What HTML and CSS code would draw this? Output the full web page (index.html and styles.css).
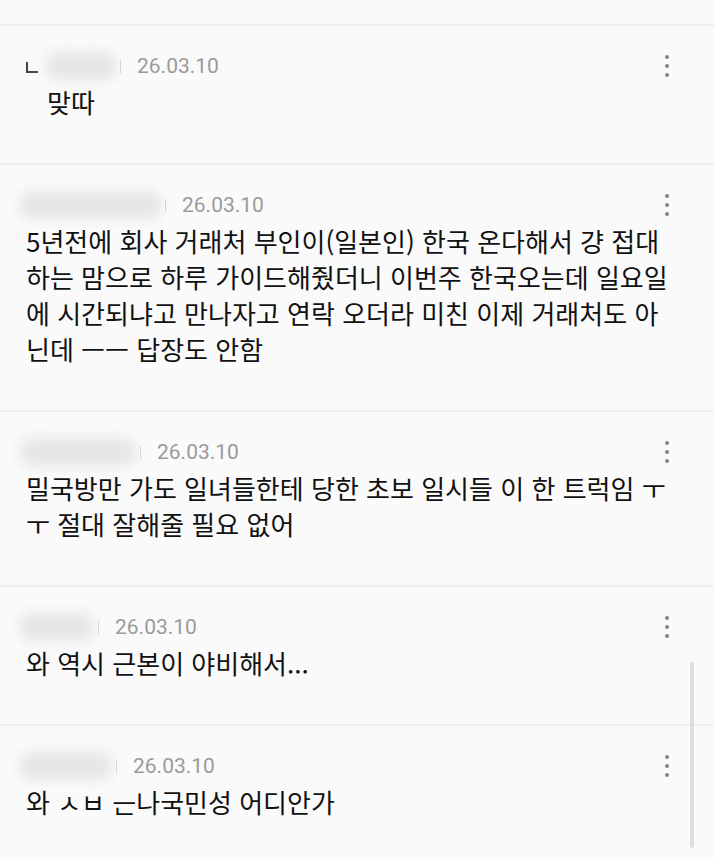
FILE: index.html
```html
<!DOCTYPE html>
<html lang="ko">
<head>
	<meta charset="UTF-8">
	<title>댓글</title>
	<link rel="stylesheet" href="styles.css">
</head>
<body>
	<ul class="comments">
		<li class="comment reply">
			<div class="comment-head">
				<span class="reply-mark"></span>
				<span class="nick" style="width:70px"></span>
				<span class="sep"></span>
				<span class="date">26.03.10</span>
				<span class="more"><i></i><i></i><i></i></span>
			</div>
			<p class="comment-body">맞따</p>
		</li>
		<li class="comment">
			<div class="comment-head">
				<span class="nick" style="width:141px"></span>
				<span class="sep"></span>
				<span class="date">26.03.10</span>
				<span class="more"><i></i><i></i><i></i></span>
			</div>
			<p class="comment-body">5년전에 회사 거래처 부인이(일본인) 한국 온다해서 걍 접대 하는 맘으로 하루 가이드해줬더니 이번주 한국오는데 일요일에 시간되냐고 만나자고 연락 오더라 미친 이제 거래처도 아닌데 ㅡㅡ 답장도 안함</p>
		</li>
		<li class="comment">
			<div class="comment-head">
				<span class="nick" style="width:116px"></span>
				<span class="sep"></span>
				<span class="date">26.03.10</span>
				<span class="more"><i></i><i></i><i></i></span>
			</div>
			<p class="comment-body">밀국방만 가도 일녀들한테 당한 초보 일시들 이 한 트럭임 ㅜ ㅜ 절대 잘해줄 필요 없어</p>
		</li>
		<li class="comment">
			<div class="comment-head">
				<span class="nick" style="width:74px"></span>
				<span class="sep"></span>
				<span class="date">26.03.10</span>
				<span class="more"><i></i><i></i><i></i></span>
			</div>
			<p class="comment-body">와 역시 근본이 야비해서...</p>
		</li>
		<li class="comment">
			<div class="comment-head">
				<span class="nick" style="width:92px"></span>
				<span class="sep"></span>
				<span class="date">26.03.10</span>
				<span class="more"><i></i><i></i><i></i></span>
			</div>
			<p class="comment-body">와 ㅅㅂ ᅟᅳᆫ나국민성 어디안가</p>
		</li>
	</ul>
	<div class="scrollbar"></div>
</body>
</html>
```

FILE: styles.css
```css
* { margin: 0; padding: 0; box-sizing: border-box; }
html, body { height: 100%; }
body { background: #fafafa; font-family: "Noto Sans CJK KR", "Noto Sans", sans-serif; color: #111; overflow: hidden; }

.comments { list-style: none; margin-top: 24px; }
.comment { border-top: 2px solid #efefef; padding: 28px 0 43px 0; }

.comment-head { display: flex; align-items: center; height: 24px; padding-left: 20px; padding-right: 45px; }
.reply .comment-head { padding-left: 26px; }
.reply-mark { width: 12px; height: 11px; border-left: 2px solid #444; border-bottom: 2px solid #444; margin: 2px 8px 0 0; }
.nick { height: 28px; background: #e6e6e6; border-radius: 12px; filter: blur(6px); }
.sep { width: 1px; height: 13px; background: #d2d2d2; margin: 0 16px 0 4px; }
.date { font-family: Roboto, "Liberation Sans", sans-serif; font-size: 21px; color: #9a9a9a; line-height: 24px; }

.more { margin-left: auto; display: flex; flex-direction: column; gap: 5px; }
.more i { display: block; width: 4px; height: 4px; border-radius: 50%; background: #858585; }

.comment-body { margin-top: 6px; padding: 0 33px 0 26px; font-size: 26px; line-height: 36px; word-break: break-all; }
.reply .comment-body { padding-left: 47px; }

.scrollbar { position: fixed; left: 690px; top: 662px; width: 4px; height: 186px; background: #dedede; border-radius: 2px; }
```
